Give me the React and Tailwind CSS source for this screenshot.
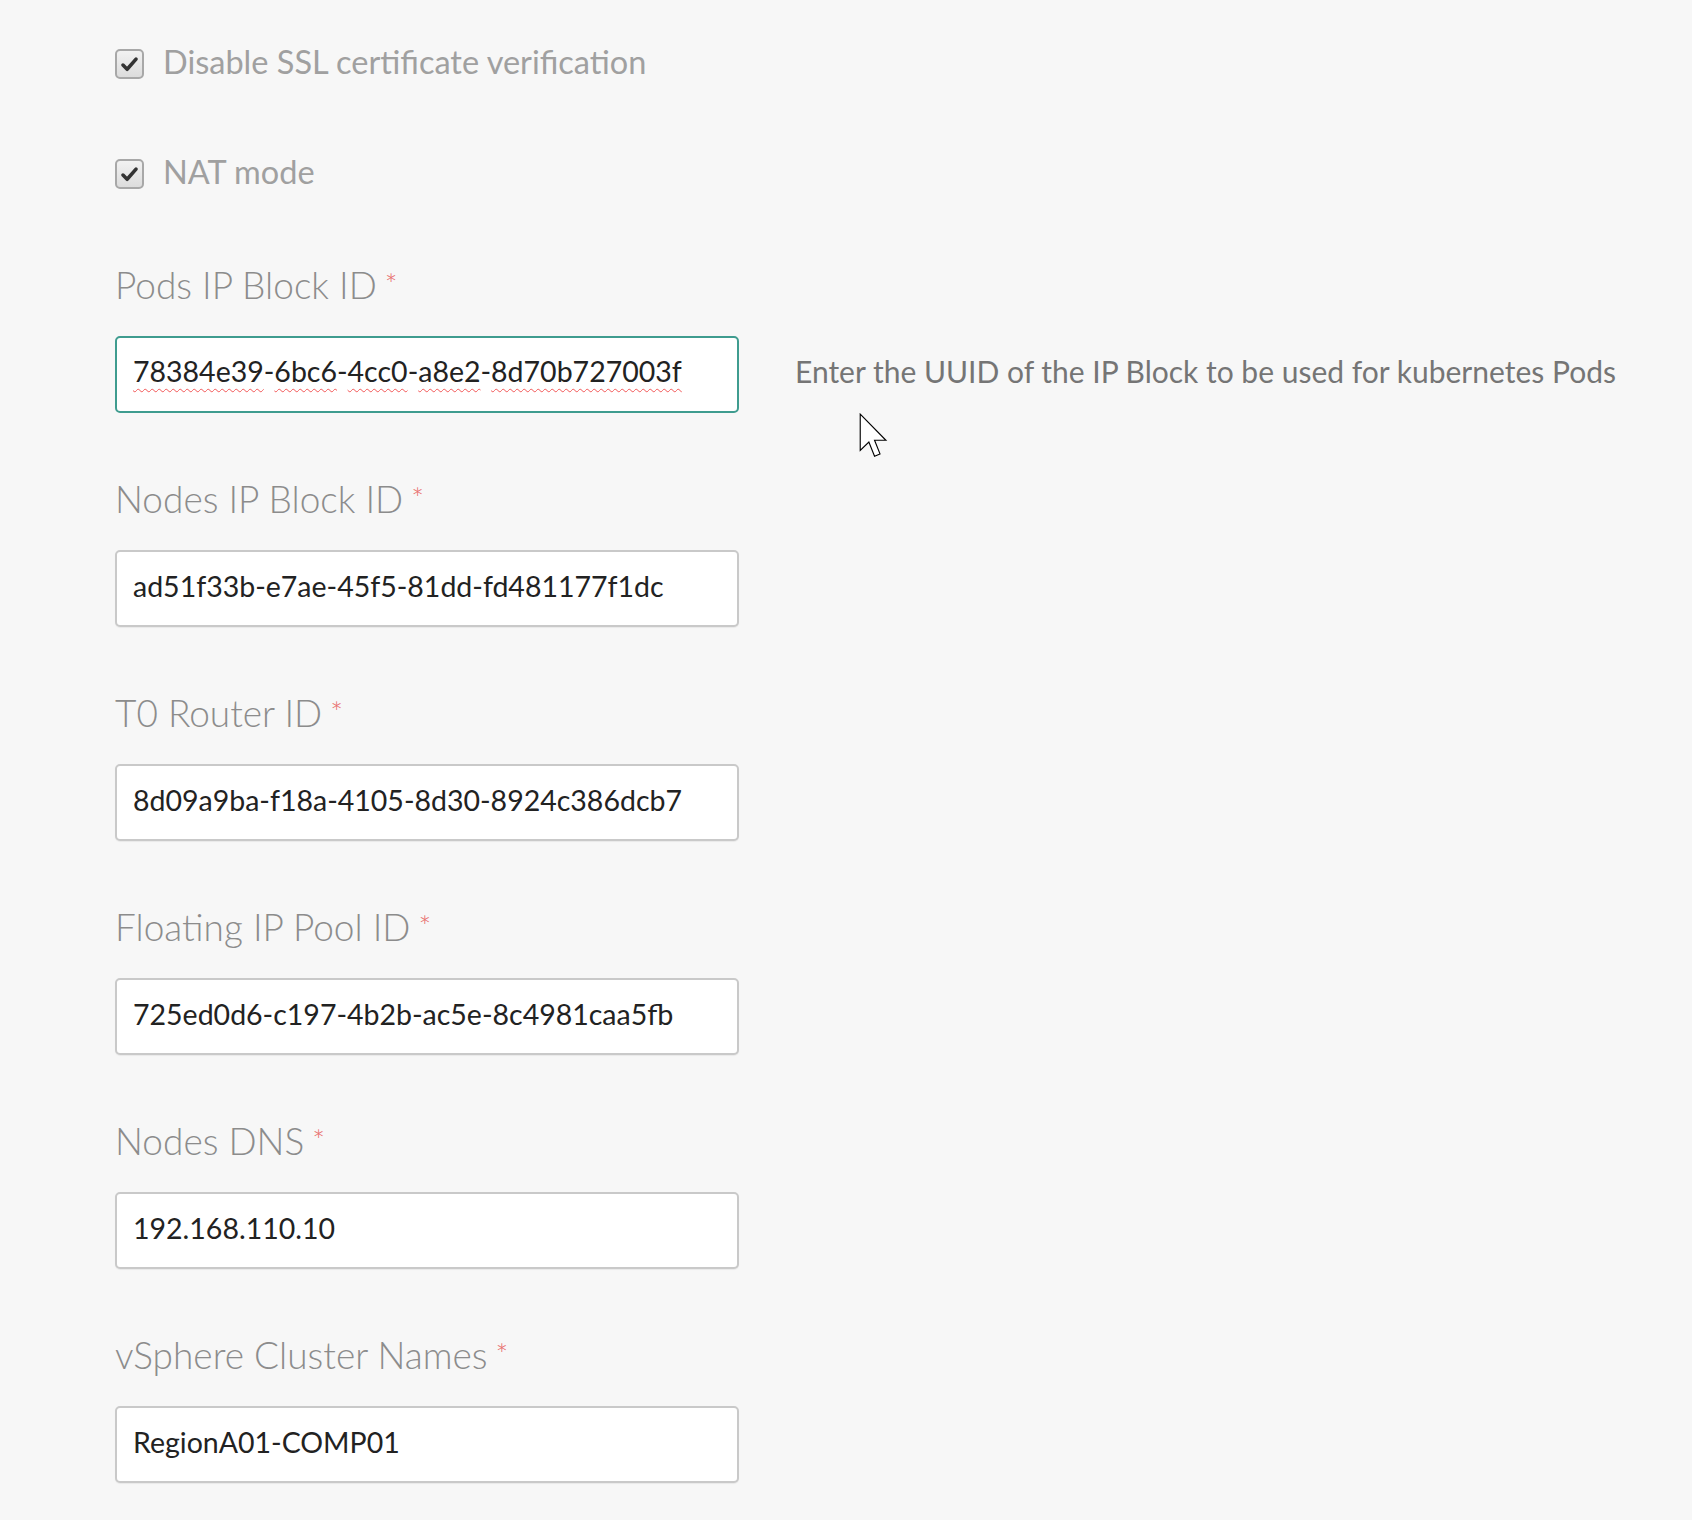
const FIELDS = [
  { label: 'Pods IP Block ID', value: '78384e39-6bc6-4cc0-a8e2-8d70b727003f', focused: true, help: 'Enter the UUID of the IP Block to be used for kubernetes Pods' },
  { label: 'Nodes IP Block ID', value: 'ad51f33b-e7ae-45f5-81dd-fd481177f1dc' },
  { label: 'T0 Router ID', value: '8d09a9ba-f18a-4105-8d30-8924c386dcb7' },
  { label: 'Floating IP Pool ID', value: '725ed0d6-c197-4b2b-ac5e-8c4981caa5fb' },
  { label: 'Nodes DNS', value: '192.168.110.10' },
  { label: 'vSphere Cluster Names', value: 'RegionA01-COMP01' },
];

function Checkbox({ label }) {
  return (
    <label className="flex items-center h-[30px]">
      <span className="w-[29px] h-[30px] rounded-[5px] border-2 border-[#a8a8a8] bg-gradient-to-b from-[#f2f2f2] to-[#dcdcdc] flex items-center justify-center">
        <svg viewBox="0 0 16 16" className="w-[19px] h-[19px]">
          <path d="M2.5 8.5 L6 12 L13.5 3.5" fill="none" stroke="#333" strokeWidth="3" strokeLinecap="round" strokeLinejoin="round" />
        </svg>
      </span>
      <span className="ml-[19px] mb-[4px] text-[32.5px] text-[#a0a0a0] leading-none">{label}</span>
    </label>
  );
}

function Field({ field, first }) {
  const words = field.value.split('-');
  return (
    <div className={first ? 'mt-[75px]' : 'mt-[65px]'}>
      <div className="h-[42px] text-[37px] leading-[42px] text-[#8c8c8c] font-light whitespace-nowrap">
        {field.label}
        <span className="ml-[8px] text-[30px] text-[#e86a6a] relative -top-[4px]">*</span>
      </div>
      <div className="mt-[30px] flex items-center">
        {field.focused ? (
          <div className="w-[624px] h-[77px] rounded-[5px] border-2 border-[#3f9c8f] bg-white flex items-center pl-[16px] pb-[6px] text-[28.5px] text-[#222]">
            {words.map((w, i) => (
              <span key={i}>
                <span className="underline decoration-wavy decoration-[#f25757] decoration-1 underline-offset-[6px]">{w}</span>
                {i < words.length - 1 && '-'}
              </span>
            ))}
          </div>
        ) : (
          <input
            readOnly
            defaultValue={field.value}
            className="w-[624px] h-[77px] rounded-[5px] border-2 border-[#c9c9c9] bg-white pl-[16px] pb-[6px] text-[28.5px] text-[#222] outline-none shadow-[0_1px_1px_rgba(0,0,0,0.06)]"
          />
        )}
        {field.help && (
          <p className="ml-[56px] mb-[6px] text-[30px] text-[#757575] whitespace-nowrap">{field.help}</p>
        )}
      </div>
    </div>
  );
}

export default function App() {
  return (
    <div className="relative min-h-screen bg-[#f7f7f7] pl-[115px] pt-[49px] pb-[40px] font-['Lato','Open_Sans',sans-serif]">
      <Checkbox label="Disable SSL certificate verification" />
      <div className="mt-[80px]">
        <Checkbox label="NAT mode" />
      </div>
      {FIELDS.map((f, i) => (
        <Field key={f.label} field={f} first={i === 0} />
      ))}

      {/* mouse pointer */}
      <svg className="absolute left-[859px] top-[413px] w-[32px] h-[50px]" viewBox="0 0 14 22">
        <path d="M0.5 0.5 L0.5 16.5 L4.3 12.8 L6.8 19 L9.2 18 L6.8 12 L11.8 12 Z" fill="#fff" stroke="#000" strokeWidth="0.5" strokeLinejoin="miter" />
      </svg>
    </div>
  );
}
